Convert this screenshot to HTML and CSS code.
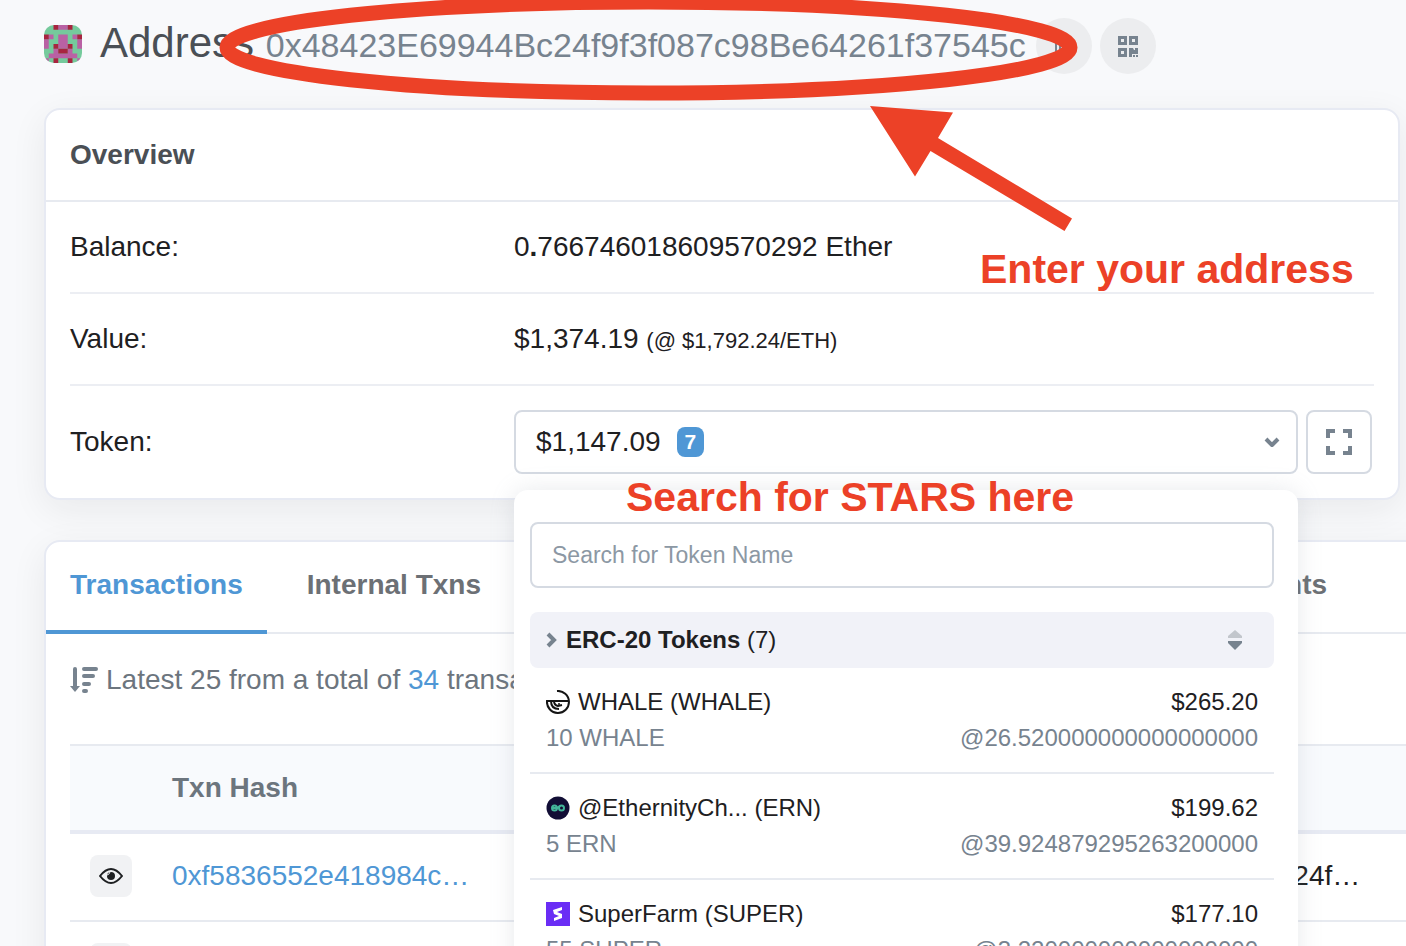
FILE: index.html
```html
<!DOCTYPE html>
<html lang="en">
<head>
<meta charset="utf-8">
<title>Address 0x48423E69944Bc24f9f3f087c98Be64261f37545c</title>
<link rel="stylesheet" href="styles.css">
</head>
<body>
<div class="page">
  <header class="page-header">
    <svg class="avatar" viewBox="0 0 8 8" aria-hidden="true">
      <rect width="8" height="8" fill="#75ca9c"/>
      <path fill="#b961a4" d="M3 0h2v1H3zM1 2h1v1H1zM6 2h1v1H6zM3 2h2v3H3zM0 3h1v2H0zM7 3h1v2H7zM2 5h1v1H2zM5 5h1v1H5zM1 6h6v1H1zM0 7h1v1H0zM7 7h1v1H7z"/>
      <path fill="#a8243f" d="M2 0h1v1H2zM5 0h1v1H5zM0 2h1v1H0zM7 2h1v1H7zM2 4h1v1H2zM5 4h1v1H5zM3 5h2v1H3zM2 7h1v1H2zM5 7h1v1H5z"/>
    </svg>
    <h1 class="title">Address <span class="title-hash">0x48423E69944Bc24f9f3f087c98Be64261f37545c</span></h1>
    <div class="header-actions">
      <button class="round-button" type="button" aria-label="Copy address">
        <svg width="22" height="22" viewBox="0 0 22 22" fill="none" stroke="#77838f" stroke-width="2"><path d="M3 4h11v14H3zM7 4v14"/></svg>
      </button>
      <button class="round-button" type="button" aria-label="Show QR code">
        <svg width="20" height="21" viewBox="0 0 20 21" fill="#77838f"><path fill-rule="evenodd" d="M0 0h9v9H0zM3 3v3h3V3zM11 0h9v9h-9zM14 3v3h3V3zM0 12h9v9H0zM3 15v3h3v-3zM11 12h4l1 2h1v-2h3v6h-6v3h-3zM15 19h2v2h-2zM18 19h2v2h-2z"/></svg>
      </button>
    </div>
  </header>

  <section class="card overview">
    <h2 class="card-title">Overview</h2>
    <div class="rows">
      <div class="row"><span>Balance:</span><span>0<b>.</b>766746018609570292 Ether</span></div>
      <div class="row"><span>Value:</span><span>$1,374.19 <small class="rate">(@ $1,792.24/ETH)</small></span></div>
      <div class="row token-row">
        <span>Token:</span>
        <div class="token-controls">
          <div class="dropdown">
            <button class="token-button" type="button" aria-expanded="true">
              <span>$1,147.09</span><span class="badge">7</span>
              <svg class="chevron" width="16" height="11" viewBox="0 0 16 11" fill="none" stroke="#77838f" stroke-width="4" stroke-linejoin="round"><path d="M2 2l6 6 6-6"/></svg>
            </button>
            <div class="menu">
              <input class="search" type="text" placeholder="Search for Token Name" aria-label="Search for Token Name">
              <button class="group" type="button">
                <svg width="12" height="16" viewBox="0 0 12 16" fill="none" stroke="#77838f" stroke-width="4"><path d="M2 2l6 6-6 6"/></svg>
                <span><b>ERC-20 Tokens</b> (7)</span>
                <svg class="sorter" width="14" height="20" viewBox="0 0 14 20"><path fill="#c2c6cc" d="M7 0l7 6v2H0V6z"/><path fill="#77838f" d="M0 11h14v2l-7 7-7-7z"/></svg>
              </button>
              <ul class="tokens">
                <li class="token">
                  <div class="line"><span class="name"><svg width="24" height="24" viewBox="0 0 24 24" fill="none" stroke="#151515" stroke-width="2"><path d="M11 1a11 11 0 1 1-10 10h22M5 11q0 8 8 8"/><path d="M8 11q0 4 4 5l4-1"/><circle cx="13" cy="14" r="1" fill="#151515" stroke="none"/></svg>WHALE (WHALE)</span><span>$265.20</span></div>
                  <div class="line muted"><span>10 WHALE</span><span>@26.520000000000000000</span></div>
                </li>
                <li class="token">
                  <div class="line"><span class="name"><svg width="24" height="24" viewBox="0 0 24 24" fill="none"><circle cx="12" cy="12" r="11.500" fill="#120e35"/><g stroke="#43b59a" stroke-width="2"><circle cx="8.500" cy="12" r="2.500"/><circle cx="15.500" cy="12" r="2.500"/><path d="M6 12h5l3-2"/></g></svg>@EthernityCh... (ERN)</span><span>$199.62</span></div>
                  <div class="line muted"><span>5 ERN</span><span>@39.924879295263200000</span></div>
                </li>
                <li class="token">
                  <div class="line"><span class="name"><svg width="24" height="24" viewBox="0 0 24 24"><path fill="#6a2df5" d="M0 0h24v24H0z"/><path fill="#fff" d="M7 8l9-3v3l-5 2 5 2v4l-8 3v-3l5-2-5-2z"/></svg>SuperFarm (SUPER)</span><span>$177.10</span></div>
                  <div class="line muted"><span>55 SUPER</span><span>@3.220000000000000000</span></div>
                </li>
              </ul>
            </div>
          </div>
          <button class="expand-button" type="button" aria-label="View all tokens">
            <svg width="26" height="26" viewBox="0 0 26 26" fill="none" stroke="#77838f" stroke-width="4"><path d="M2 9V2h7M17 2h7v7M24 17v7h-7M9 24H2v-7"/></svg>
          </button>
        </div>
      </div>
    </div>
  </section>

  <section class="card transactions">
    <nav class="tabs">
      <a class="tab active" href="#transactions">Transactions</a>
      <a class="tab" href="#internal">Internal Txns</a>
      <a class="tab" href="#erc20">Erc-20 Token Txns</a>
      <a class="tab" href="#erc721">Erc-721 Token Txns</a>
      <a class="tab" href="#comments">Comments</a>
    </nav>
    <div class="panel">
      <p class="summary">
        <svg width="28" height="26" viewBox="0 0 28 26" fill="none" stroke="#77838f" stroke-linecap="round"><path stroke-width="4" d="M5 2v19"/><path fill="#77838f" stroke="none" d="M0 19h10l-5 6z"/><path stroke-width="4" d="M14 2h12M14 9h9M14 17h5M14 24h2"/></svg>
        <span>Latest 25 from a total of <a class="link" href="#all">34</a> transactions</span>
      </p>
      <table class="table">
        <thead><tr><th class="col-view"></th><th class="col-hash">Txn Hash</th><th>From</th></tr></thead>
        <tbody>
          <tr>
            <td><button class="view" type="button" aria-label="Preview transaction"><svg width="24" height="16" viewBox="0 0 24 16" fill="none" stroke="#1e2022" stroke-width="2"><path d="M1 8q11-14 22 0-11 14-22 0z"/><circle cx="12" cy="8" r="4" fill="#1e2022" stroke="none"/><path stroke="#f1f2f4" stroke-width="1" d="M8 7q2 0 3-3"/></svg></button></td>
            <td><a class="link" href="#tx1">0xf5836552e418984c…</a></td>
            <td>0x48423e69944bc24f…</td>
          </tr>
          <tr>
            <td><button class="view" type="button" aria-label="Preview transaction"></button></td>
            <td></td>
            <td></td>
          </tr>
        </tbody>
      </table>
    </div>
  </section>

  <div class="notes">
    <svg class="marks" width="1100" height="240" viewBox="0 0 1100 240" aria-hidden="true">
      <ellipse cx="648.500" cy="47.500" rx="421.500" ry="45.500" fill="none" stroke="#ec4127" stroke-width="15"/>
      <path fill="#ec4127" d="M870 106l83 6.500-15 25.500 134 80.500-7.500 12.500-134-80-15.500 25.500z"/>
    </svg>
    <p class="note note-address">Enter your address</p>
    <p class="note note-search">Search for STARS here</p>
  </div>
</div>
</body>
</html>
```
FILE: styles.css
```css
* { box-sizing: border-box; }

body {
  margin: 0;
  background: #f8fafd;
  color: #1e2022;
  font: 28px/42px "Liberation Sans", Arial, sans-serif;
}

button, input {
  font: inherit;
  color: inherit;
  margin: 0;
}

h1, h2, p, ul { margin: 0; padding: 0; }
a { text-decoration: none; }

.page {
  position: relative;
  height: 100vh;
  overflow: hidden;
  padding: 0 6px 0 44px;
  background: #f8f9fb;
}

/* Header */
.page-header {
  display: flex;
  align-items: center;
  height: 108px;
  padding-bottom: 20px;
}

.avatar {
  width: 38px;
  height: 38px;
  border-radius: 10px;
  margin-right: 18px;
}

.title {
  color: #4a4f55;
  font-size: 42px;
  font-weight: 400;
  line-height: 48px;
  white-space: nowrap;
}

.title-hash { font-size: 34px; color: #77838f; }

.header-actions {
  display: flex;
  gap: 8px;
  margin-left: 10px;
  padding-top: 4px;
}

.round-button {
  display: flex;
  align-items: center;
  justify-content: center;
  width: 56px;
  height: 56px;
  padding: 0;
  border: 0;
  border-radius: 50%;
  background: #ecedef;
}

/* Cards */
.card {
  background: #fff;
  border: 2px solid #e7eaf3;
  border-radius: 16px;
  box-shadow: 0 10px 36px rgba(30, 32, 34, 0.07);
}

.card-title {
  padding: 24px;
  border-bottom: 2px solid #e7eaf0;
  color: #4a4f55;
  font-size: 28px;
  line-height: 42px;
}

.rows { padding: 0 24px; }

.row {
  display: grid;
  grid-template-columns: minmax(0, 444px) 1fr;
  align-items: center;
  padding: 24px 0;
  border-bottom: 2px solid #eceef3;
}

.row:last-child { border-bottom: 0; }
.rate { font-size: 22px; line-height: 24px; }

/* Token picker */
.token-controls { display: flex; gap: 8px; padding-right: 2px; }
.dropdown { position: relative; flex: 1; }

.token-button, .expand-button {
  display: flex;
  align-items: center;
  height: 64px;
  background: #fff;
  border: 2px solid #d5dae2;
  border-radius: 8px;
}

.token-button { width: 100%; gap: 16px; padding: 0 16px 0 20px; }
.expand-button { width: 66px; padding: 0; justify-content: center; }
.chevron { margin-left: auto; }

.badge {
  padding: 0 8px;
  border-radius: 8px;
  background: #4f97d5;
  color: #fff;
  font-size: 21px;
  font-weight: 700;
  line-height: 30px;
}

.menu {
  position: absolute;
  z-index: 2;
  top: 80px;
  left: 0;
  right: 0;
  padding: 32px 24px 24px 16px;
  border-radius: 14px;
  background: #fff;
  box-shadow: 0 0 24px rgba(140, 152, 164, 0.2);
}

.search {
  display: block;
  width: 100%;
  height: 66px;
  padding: 0 20px;
  border: 2px solid #d5dae2;
  border-radius: 8px;
  background: #fff;
  font-size: 23px;
}

.search::placeholder { color: #8c98a4; opacity: 1; }

.group {
  display: flex;
  align-items: center;
  gap: 8px;
  width: 100%;
  height: 56px;
  margin-top: 24px;
  padding: 0 32px 0 16px;
  border: 0;
  border-radius: 8px;
  background: #f1f2f8;
  font-size: 24px;
}

.sorter { margin-left: auto; }
.tokens { list-style: none; }

.token {
  padding: 16px;
  border-bottom: 2px solid #e7eaf0;
  font-size: 24px;
  line-height: 36px;
}

.line { display: flex; justify-content: space-between; }
.name { display: flex; align-items: center; gap: 8px; }
.muted { color: #77838f; }

/* Transactions */
.transactions { margin: 40px -64px 0 0; }

.tabs {
  display: flex;
  gap: 16px;
  border-bottom: 2px solid #e7eaf0;
}

.tab {
  margin-bottom: -2px;
  padding: 22px 24px 24px;
  border-bottom: 4px solid transparent;
  color: #6c7075;
  font-weight: 700;
  white-space: nowrap;
}

.tab.active { color: #4f97d5; border-color: #4f97d5; }
.link { color: #4f97d5; }
.panel { padding: 25px 0 24px 24px; }

.summary {
  display: flex;
  align-items: center;
  gap: 8px;
  margin-bottom: 43px;
  color: #6c757e;
}

.table {
  width: 100%;
  table-layout: fixed;
  border-collapse: separate;
  border-spacing: 0;
}

.table th {
  padding: 21px 0;
  border-top: 2px solid #e7eaf0;
  border-bottom: 4px solid #e7eaf3;
  background: #f8fafd;
  color: #6c757e;
  text-align: left;
}

.table td {
  height: 88px;
  padding: 20px 0 22px;
  border-bottom: 2px solid #e7eaf0;
}

.col-view { width: 102px; }
.col-hash { width: 64%; }

.view {
  display: flex;
  align-items: center;
  justify-content: center;
  width: 42px;
  height: 42px;
  margin-left: 20px;
  padding: 0;
  border: 0;
  border-radius: 8px;
  background: #f1f2f4;
}

/* Hand-drawn notes lying over the page */
.notes { position: absolute; inset: 0; z-index: 3; pointer-events: none; }
.marks { position: absolute; top: 0; left: 0; }

.note {
  position: absolute;
  color: #ec4127;
  font-size: 41px;
  font-weight: 700;
  line-height: 48px;
  white-space: nowrap;
}

.note-address { top: 245px; left: 980px; }
.note-search { top: 473px; left: 626px; }
```
